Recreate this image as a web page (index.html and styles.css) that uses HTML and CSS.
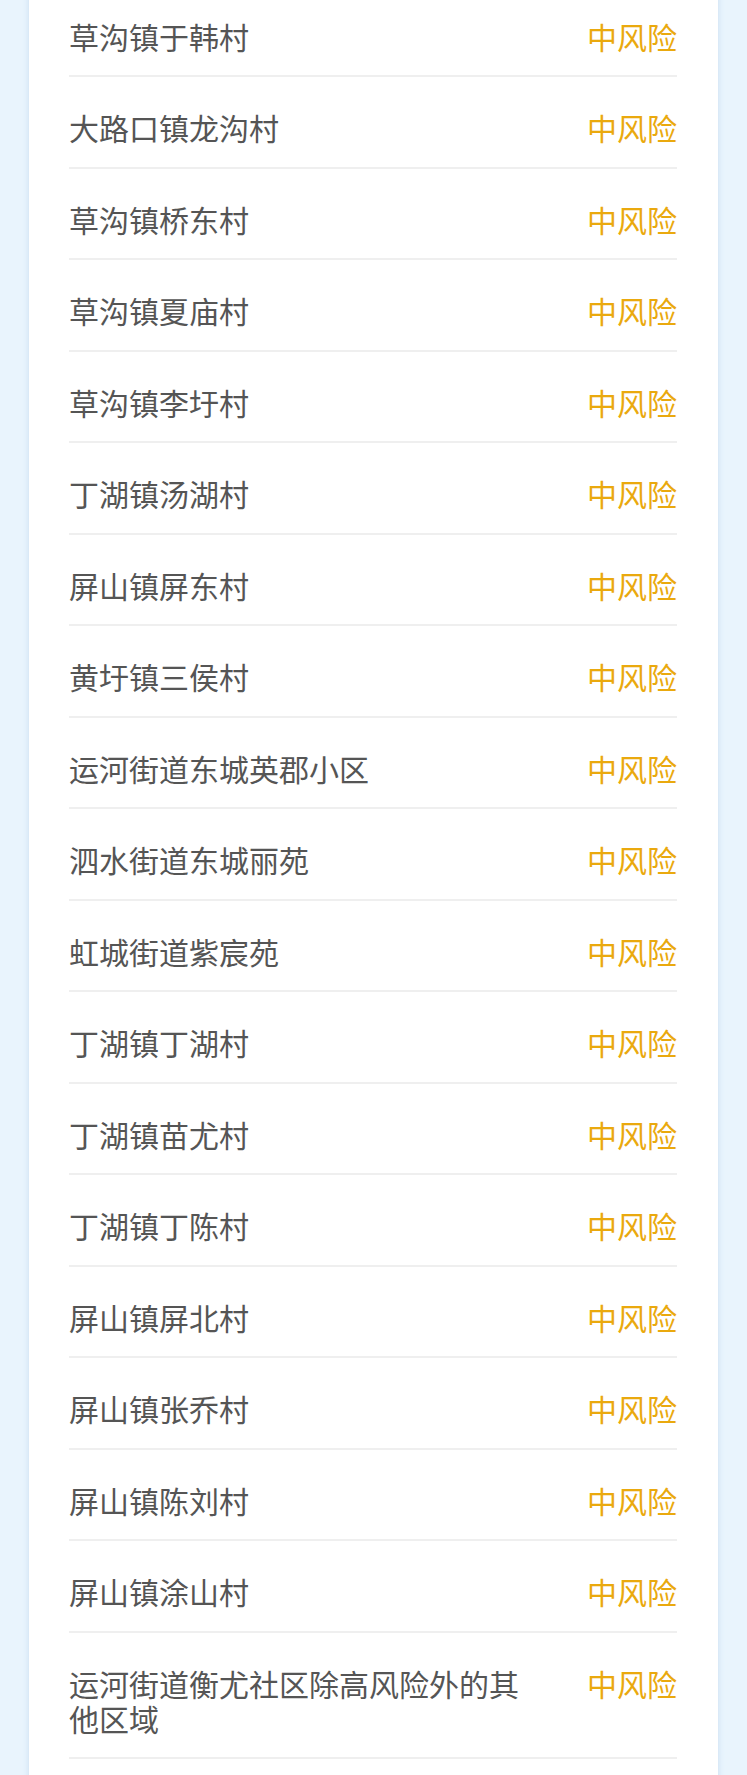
FILE: index.html
```html
<!DOCTYPE html>
<html lang="zh-CN">
<head>
<meta charset="UTF-8">
<meta name="viewport" content="width=device-width, initial-scale=1.0">
<title>风险地区列表</title>
<link rel="stylesheet" href="styles.css">
</head>
<body>
    <div class="area-card">
        <!-- 中风险地区 -->
        <ul class="area-list">
            <li class="area-row"><span class="area-name">草沟镇于韩村</span><span class="area-level">中风险</span></li>
            <li class="area-row"><span class="area-name">大路口镇龙沟村</span><span class="area-level">中风险</span></li>
            <li class="area-row"><span class="area-name">草沟镇桥东村</span><span class="area-level">中风险</span></li>
            <li class="area-row"><span class="area-name">草沟镇夏庙村</span><span class="area-level">中风险</span></li>
            <li class="area-row"><span class="area-name">草沟镇李圩村</span><span class="area-level">中风险</span></li>
            <li class="area-row"><span class="area-name">丁湖镇汤湖村</span><span class="area-level">中风险</span></li>
            <li class="area-row"><span class="area-name">屏山镇屏东村</span><span class="area-level">中风险</span></li>
            <li class="area-row"><span class="area-name">黄圩镇三侯村</span><span class="area-level">中风险</span></li>
            <li class="area-row"><span class="area-name">运河街道东城英郡小区</span><span class="area-level">中风险</span></li>
            <li class="area-row"><span class="area-name">泗水街道东城丽苑</span><span class="area-level">中风险</span></li>
            <li class="area-row"><span class="area-name">虹城街道紫宸苑</span><span class="area-level">中风险</span></li>
            <li class="area-row"><span class="area-name">丁湖镇丁湖村</span><span class="area-level">中风险</span></li>
            <li class="area-row"><span class="area-name">丁湖镇苗尤村</span><span class="area-level">中风险</span></li>
            <li class="area-row"><span class="area-name">丁湖镇丁陈村</span><span class="area-level">中风险</span></li>
            <li class="area-row"><span class="area-name">屏山镇屏北村</span><span class="area-level">中风险</span></li>
            <li class="area-row"><span class="area-name">屏山镇张乔村</span><span class="area-level">中风险</span></li>
            <li class="area-row"><span class="area-name">屏山镇陈刘村</span><span class="area-level">中风险</span></li>
            <li class="area-row"><span class="area-name">屏山镇涂山村</span><span class="area-level">中风险</span></li>
            <li class="area-row"><span class="area-name">运河街道衡尤社区除高风险外的其他区域</span><span class="area-level">中风险</span></li>
        </ul>
    </div>
</body>
</html>
```

FILE: styles.css
```css
body {
margin: 0;
padding: 0 29px 0 29px;
background-color: #e9f4fd;
font-family: "Noto Sans CJK SC", "Noto Sans", sans-serif;
overflow: hidden;
}

.area-card {
background: #ffffff;
padding: 0 41px 40px 40px;
box-shadow: 0 0 6px rgba(140, 180, 220, 0.35);
}

.area-list {
list-style: none;
margin: -14.5px 0 0 0;
padding: 0;
}

.area-row {
display: flex;
align-items: flex-start;
padding: 33px 0 21.5px 0;
border-bottom: 2px solid #efefef;
font-size: 30px;
line-height: 35px;
}

.area-name {
flex: 1;
color: #555555;
}

.area-level {
margin-left: 50px;
color: #eaa90e;
white-space: nowrap;
}
```
